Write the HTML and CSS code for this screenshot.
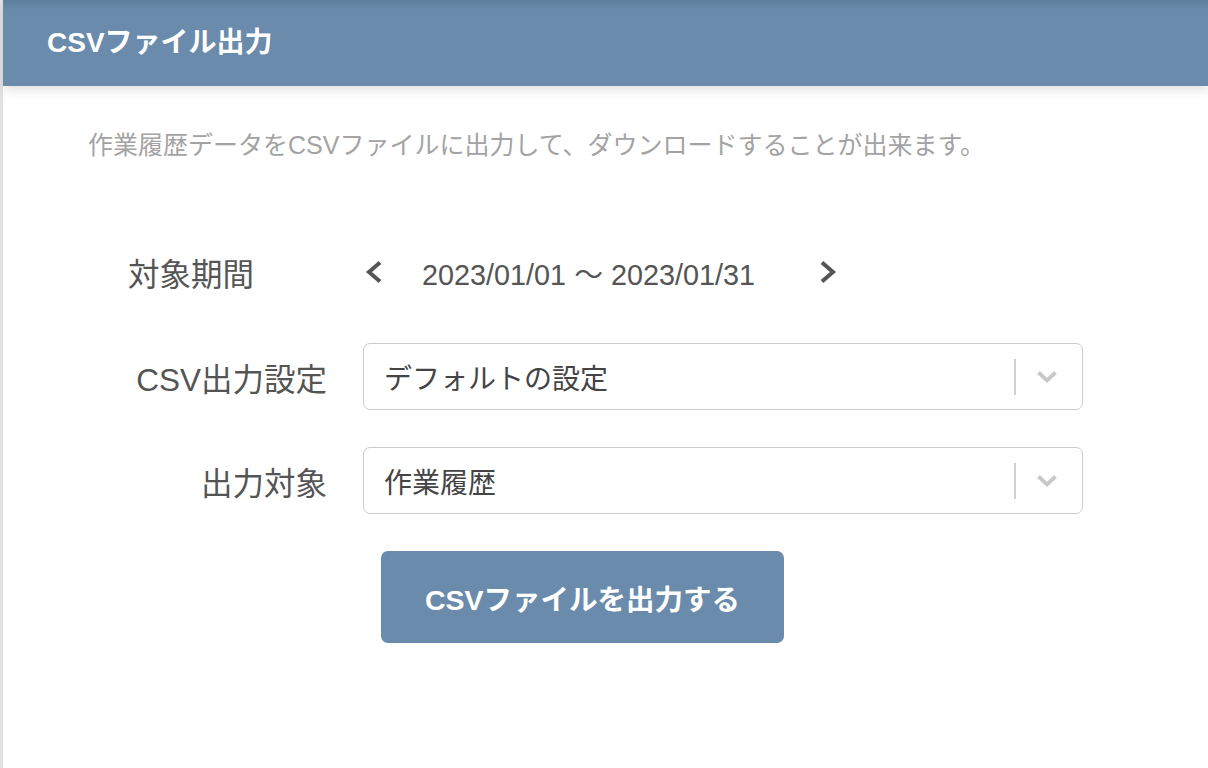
FILE: index.html
```html
<!DOCTYPE html>
<html lang="ja">
<head>
<meta charset="utf-8">
<title>CSVファイル出力</title>
<link rel="stylesheet" href="styles.css">
</head>
<body>
<div class="page">
  <header class="header">
    <h1 class="header-title">CSVファイル出力</h1>
  </header>
  <p class="desc">作業履歴データをCSVファイルに出力して、ダウンロードすることが出来ます。</p>
  <div class="form">
    <div class="label label-left">対象期間</div>
    <div class="period">
      <button class="nav-btn" type="button" aria-label="前の期間">
        <svg width="20" height="24" viewBox="0 0 20 24"><polyline points="16,2.5 5,12 16,21.5" fill="none" stroke="#555" stroke-width="4"/></svg>
      </button>
      <span class="period-text">2023/01/01 〜 2023/01/31</span>
      <button class="nav-btn nav-next" type="button" aria-label="次の期間">
        <svg width="20" height="24" viewBox="0 0 20 24"><polyline points="4,2.5 15,12 4,21.5" fill="none" stroke="#555" stroke-width="4"/></svg>
      </button>
    </div>

    <div class="label">CSV出力設定</div>
    <div class="select">
      <span class="select-value">デフォルトの設定</span>
      <span class="select-sep"></span>
      <svg class="select-arrow" width="22" height="14" viewBox="0 0 22 14"><polyline points="2.5,2.5 11,10.5 19.5,2.5" fill="none" stroke="#c8c8c8" stroke-width="3.8"/></svg>
    </div>

    <div class="label">出力対象</div>
    <div class="select">
      <span class="select-value">作業履歴</span>
      <span class="select-sep"></span>
      <svg class="select-arrow" width="22" height="14" viewBox="0 0 22 14"><polyline points="2.5,2.5 11,10.5 19.5,2.5" fill="none" stroke="#c8c8c8" stroke-width="3.8"/></svg>
    </div>

    <div class="actions">
      <button class="submit" type="button">CSVファイルを出力する</button>
    </div>
  </div>
</div>
</body>
</html>
```

FILE: styles.css
```css
html, body {
  margin: 0;
  padding: 0;
  background: #ffffff;
}

body {
  font-family: "Liberation Sans", "Noto Sans CJK JP", sans-serif;
  color: #555555;
}

.page {
  min-height: 768px;
  border-left: 3px solid #e2e2e2;
  box-sizing: border-box;
}

.header {
  height: 86px;
  background: linear-gradient(to bottom, #5f7f9e 0px, #6a8bab 10px, #6a8bab 100%);
  box-shadow: 0 4px 10px rgba(0, 0, 0, 0.12);
  display: flex;
  align-items: center;
  padding-left: 44px;
}

.header-title {
  margin: 0;
  font-size: 28px;
  font-weight: 700;
  color: #ffffff;
  line-height: 1;
}

.desc {
  margin: 41px 0 0 85px;
  font-size: 25px;
  line-height: 37px;
  color: #a3a3a3;
}

.form {
  margin-top: 74px;
  display: grid;
  grid-template-columns: 199px 720px;
  grid-template-rows: 68px 67px 67px auto;
  column-gap: 36px;
  row-gap: 37px;
  padding-left: 125px;
}

.label {
  font-size: 31.5px;
  color: #555555;
  display: flex;
  align-items: center;
  justify-content: flex-end;
  white-space: nowrap;
}

.label-left {
  justify-content: flex-start;
}

.period {
  display: flex;
  align-items: center;
  padding-left: 1px;
}

.nav-btn {
  border: 0;
  background: none;
  padding: 0;
  display: flex;
  align-items: center;
  cursor: pointer;
}

.period-text {
  font-size: 28.8px;
  color: #555555;
  margin-left: 38px;
  width: 396px;
}

.select {
  border: 1px solid #cccccc;
  border-radius: 7px;
  display: flex;
  align-items: center;
  padding-left: 20px;
  padding-right: 24px;
}

.select-value {
  flex: 1;
  font-size: 28px;
  color: #444444;
}

.select-sep {
  width: 2px;
  height: 36px;
  background: #d0d0d0;
  margin-right: 20px;
}

.select-arrow {
  display: block;
}

.actions {
  grid-column: 2;
  padding-left: 18px;
}

.submit {
  width: 403px;
  height: 92px;
  border: 0;
  border-radius: 7px;
  background: #6a8bab;
  color: #ffffff;
  font-family: "Liberation Sans", "Noto Sans CJK JP", sans-serif;
  font-size: 28.5px;
  font-weight: 700;
  cursor: pointer;
}
```
